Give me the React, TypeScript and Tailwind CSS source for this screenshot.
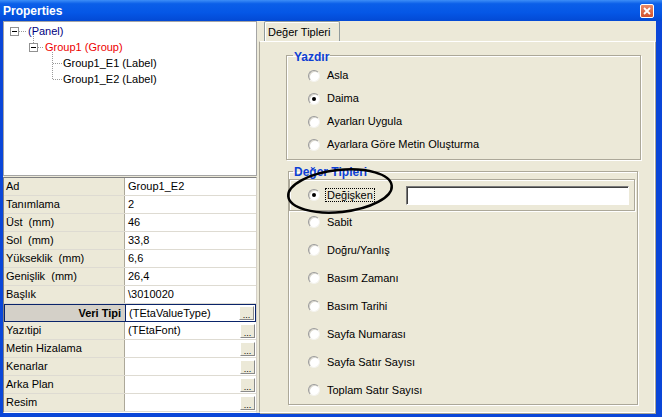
import React from 'react';

const Radio = ({ checked }: { checked?: boolean }) => (
  <span className="w-[12px] h-[12px] shrink-0 rounded-full bg-white border border-[#9a9a9a] border-r-[#f4f3ee] border-b-[#f4f3ee] shadow-[inset_1px_1px_0_#d8d6cc] flex items-center justify-center">
    {checked && <span className="w-[4px] h-[4px] rounded-full bg-black" />}
  </span>
);

const MinusBox = () => (
  <span className="w-[9px] h-[9px] shrink-0 border border-[#919191] bg-white flex items-center justify-center">
    <span className="w-[5px] h-[1px] bg-black" />
  </span>
);

const DotsButton = () => (
  <span className="w-[15px] h-[14px] self-end mb-[1px] mr-[1px] shrink-0 bg-[#ece9d8] border border-white border-r-[#8a8a8a] border-b-[#8a8a8a] flex items-end justify-center text-[9px] leading-[8px] text-black">
    ...
  </span>
);

const plainRows: [string, string][] = [
  ['Ad', 'Group1_E2'],
  ['Tanımlama', '2'],
  ['Üst  (mm)', '46'],
  ['Sol  (mm)', '33,8'],
  ['Yükseklik  (mm)', '6,6'],
  ['Genişlik  (mm)', '26,4'],
  ['Başlık', '\\3010020'],
];

const buttonRows: [string, string][] = [
  ['Yazıtipi', '(TEtaFont)'],
  ['Metin Hizalama', ''],
  ['Kenarlar', ''],
  ['Arka Plan', ''],
  ['Resim', ''],
];

const valueTypes = ['Sabit', 'Doğru/Yanlış', 'Basım Zamanı', 'Basım Tarihi', 'Sayfa Numarası', 'Sayfa Satır Sayısı', 'Toplam Satır Sayısı'];

export default function App() {
  return (
    <div className="relative w-[662px] h-[417px] overflow-hidden bg-[#0a46d8] flex flex-col font-['Liberation_Sans',Arial,sans-serif] text-[11px] text-black">
      {/* title bar */}
      <div className="h-[21px] shrink-0 flex items-center justify-between pl-[3px] pr-[8px] bg-[linear-gradient(to_bottom,#3d8ef7_0%,#0b5fe9_18%,#0557e6_60%,#0349d4_100%)]">
        <span className="text-white font-bold text-[12px] leading-none">Properties</span>
        <span className="w-[14px] h-[14px] rounded-[2px] border border-white bg-[linear-gradient(to_bottom,#ea8a68,#d2512c)] flex items-center justify-center">
          <svg width="8" height="8" viewBox="0 0 8 8">
            <path d="M1 1 L7 7 M7 1 L1 7" stroke="white" strokeWidth="1.8" />
          </svg>
        </span>
      </div>

      <div className="flex flex-1 ml-[3px] mr-[6px] mb-[4px] bg-[#ece9d8]">
        {/* left pane */}
        <div className="w-[254px] flex flex-col">
          <div className="relative h-[155px] shrink-0 bg-white border border-[#a5a5a5] pt-[1px]">
            <svg className="absolute left-0 top-0 pointer-events-none" width="120" height="80">
              <g stroke="#9a9a9a" strokeDasharray="1 1" shapeRendering="crispEdges">
                <line x1="15" y1="9.5" x2="23" y2="9.5" />
                <line x1="29.5" y1="14" x2="29.5" y2="21" />
                <line x1="34" y1="25.5" x2="40" y2="25.5" />
                <line x1="48.5" y1="30" x2="48.5" y2="58" />
                <line x1="49" y1="41.5" x2="58" y2="41.5" />
                <line x1="49" y1="57.5" x2="58" y2="57.5" />
              </g>
            </svg>
            <div className="h-[16px] flex items-center pl-[6px]">
              <MinusBox />
              <span className="ml-[9px] text-[#000080]">(Panel)</span>
            </div>
            <div className="h-[16px] flex items-center pl-[25px]">
              <MinusBox />
              <span className="ml-[7px] text-[#ee0000]">Group1 (Group)</span>
            </div>
            <div className="h-[16px] flex items-center pl-[59px]">Group1_E1 (Label)</div>
            <div className="h-[16px] flex items-center pl-[59px]">Group1_E2 (Label)</div>
          </div>

          {/* property grid */}
          <div className="flex-1 mt-[1px] bg-white border-t border-l border-[#808080] border-r border-r-[#d4d0c8] border-b border-b-white flex flex-col">
            {plainRows.map(([k, v]) => (
              <div key={k} className="h-[18px] shrink-0 flex border-b border-[#dedbd2]">
                <div className="w-[121px] bg-[#ece9d8] pl-[2px] flex items-center whitespace-pre border-r border-[#aca899]">{k}</div>
                <div className="flex-1 pl-[3px] flex items-center">{v}</div>
              </div>
            ))}
            <div className="h-[18px] shrink-0 flex border border-[#0a246a]">
              <div className="w-[120px] bg-[#d4d0c8] pr-[4px] flex items-center justify-end font-bold">Veri Tipi</div>
              <div className="flex-1 pl-[3px] flex items-center border-l border-[#0a246a]">
                <span className="flex-1">(TEtaValueType)</span>
                <DotsButton />
              </div>
            </div>
            {buttonRows.map(([k, v]) => (
              <div key={k} className="h-[18px] shrink-0 flex border-b border-[#dedbd2]">
                <div className="w-[121px] bg-[#ece9d8] pl-[2px] flex items-center border-r border-[#aca899]">{k}</div>
                <div className="flex-1 pl-[3px] flex items-center">
                  <span className="flex-1">{v}</span>
                  <DotsButton />
                </div>
              </div>
            ))}
          </div>
        </div>

        {/* right pane */}
        <div className="flex-1 ml-[2px] flex flex-col">
          <div className="h-[20px] shrink-0 flex items-end pl-[5px]">
            <div className="w-[76px] h-[20px] border border-[#919b9c] border-b-0 rounded-t-[2px] shadow-[inset_1px_1px_0_white] flex items-center pl-[3px] pt-[1px]">
              Değer Tipleri
            </div>
          </div>
          <div className="flex-1 mr-[1px] border border-[#aca899] border-t-white border-r-white border-b-white shadow-[1px_1px_0_#aca899] flex flex-col">
            <fieldset className="ml-[26px] mt-[5px] w-[355px] border border-[#aca899] shadow-[inset_1px_1px_0_white,1px_1px_0_white]">
              <legend className="ml-[6px] px-[1px] pt-[3px] leading-[14px] font-bold text-[12px] text-[#0d3fd4]">Yazdır</legend>
              <div className="pl-[21px] pb-[3px] flex flex-col">
                {['Asla', 'Daima', 'Ayarları Uygula', 'Ayarlara Göre Metin Oluşturma'].map((t) => (
                  <div key={t} className="h-[23px] flex items-center">
                    <Radio checked={t === 'Daima'} />
                    <span className="ml-[7px]">{t}</span>
                  </div>
                ))}
              </div>
            </fieldset>

            <fieldset className="ml-[28px] mt-[3px] w-[350px] border border-[#aca899] shadow-[inset_1px_1px_0_white,1px_1px_0_white]">
              <legend className="ml-[4px] px-[1px] pt-[2px] leading-[14px] font-bold text-[12px] text-[#0d3fd4]">Değer Tipleri</legend>
              <div className="h-[32px] mr-[2px] border border-[#aca899] shadow-[inset_1px_1px_0_white,1px_1px_0_white] flex items-center pl-[18px]">
                <Radio checked />
                <span className="ml-[5px] px-[1px] border border-dotted border-black leading-[12px]">Değişken</span>
                <span className="ml-auto mr-[5px] w-[223px] h-[19px] bg-white border border-[#7a7a7a] border-r-white border-b-white shadow-[inset_1px_1px_0_#404040]" />
              </div>
              <div className="-mt-[3px] pl-[19px] flex flex-col">
                {valueTypes.map((t) => (
                  <div key={t} className="h-[28px] flex items-center">
                    <Radio />
                    <span className="ml-[7px]">{t}</span>
                  </div>
                ))}
              </div>
            </fieldset>
          </div>
        </div>
      </div>

      {/* hand-drawn ellipse annotation */}
      <svg className="absolute left-[280px] top-[160px] pointer-events-none" width="125" height="65" viewBox="0 0 125 65">
        <ellipse cx="60" cy="31" rx="52" ry="21" fill="none" stroke="black" strokeWidth="2.5" transform="rotate(-6 60 31)" />
      </svg>
    </div>
  );
}
